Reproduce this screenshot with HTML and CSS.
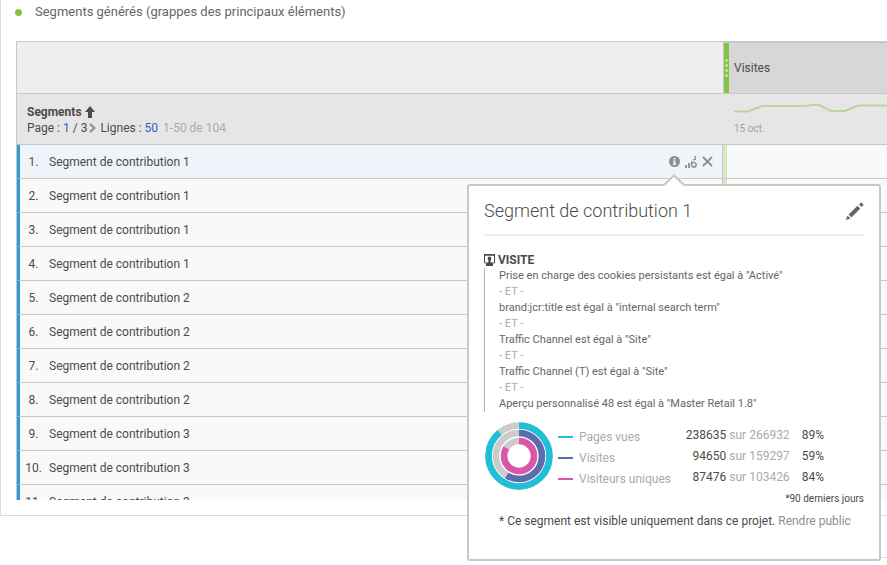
FILE: index.html
```
<!DOCTYPE html>
<html lang="fr">
<head>
<meta charset="utf-8">
<title>Segments générés</title>
<link rel="stylesheet" href="styles.css">
</head>
<body>
<main class="panel">
  <h1 class="panel-title"><span class="dot"></span>Segments générés (grappes des principaux éléments)</h1>
  <div class="table-view">
    <table class="segments">
      <colgroup><col class="col-name"><col></colgroup>
      <thead>
        <tr class="head-metric">
          <td></td>
          <th class="metric" scope="col"><div class="metric-cell"><span class="handle"><i></i><i></i><i></i><i></i></span>Visites</div></th>
        </tr>
        <tr class="head-tools">
          <th scope="col">
            <div class="sort">Segments
              <svg width="10" height="12" viewBox="0 0 10 12"><path d="M5 0L10 6H7V12H3V6H0Z" fill="#4b4b4b"/></svg>
            </div>
            <div class="pager">
              <span>Page : <a href="#page">1</a> / 3</span>
              <button class="icon-button" type="button" aria-label="Page suivante"><svg width="7" height="10" viewBox="0 0 7 10"><path d="M1 1L5.500 5L1 9" fill="none" stroke="#8e8e8e" stroke-width="2"/></svg></button>
              <span class="lines">Lignes : <a href="#lignes">50</a></span>
              <span class="range">1-50 de 104</span>
            </div>
          </th>
          <td class="trend">
            <svg class="spark" width="160" height="12" viewBox="0 0 160 12"><path d="M0 8.500H14L28 3H70L84 1.500L97 8H111L124 2.500H160" fill="none" stroke="#b9d696" stroke-width="2"/></svg>
            <div class="date">15 oct.</div>
          </td>
        </tr>
      </thead>
      <tbody>
        <tr class="selected">
          <td><div class="name-cell"><span class="num">1.</span><span class="name">Segment de contribution 1</span>
            <span class="actions">
              <button class="icon-button" type="button" aria-label="Informations"><svg width="11" height="11" viewBox="0 0 11 11"><circle cx="5.500" cy="5.500" r="5.500" fill="#8b8f92"/><path d="M4.500 2H6.500V3.500H4.500ZM4 4.500H6.500V8H7.300V9H3.800V8H4.600V5.500H4Z" fill="#eef4f9"/></svg></button>
              <button class="icon-button" type="button" aria-label="Visualiser"><svg width="12" height="12" viewBox="0 0 12 12"><path d="M0 9H2V12H0ZM3 7H5V12H3ZM6 5H7.500V7H6ZM9.500 0H11V4H9.500ZM8 3H10V4.500H8Z" fill="#92979a"/><circle cx="8.800" cy="8.800" r="2.300" fill="none" stroke="#92979a" stroke-width="1.700"/></svg></button>
              <button class="icon-button" type="button" aria-label="Supprimer"><svg width="11" height="11" viewBox="0 0 11 11"><path d="M1 1L10 10M10 1L1 10" stroke="#8b9093" stroke-width="1.800"/></svg></button>
            </span></div></td><td></td>
        </tr>
        <tr><td><div class="name-cell"><span class="num">2.</span><span class="name">Segment de contribution 1</span></div></td><td></td></tr>
        <tr><td><div class="name-cell"><span class="num">3.</span><span class="name">Segment de contribution 1</span></div></td><td></td></tr>
        <tr><td><div class="name-cell"><span class="num">4.</span><span class="name">Segment de contribution 1</span></div></td><td></td></tr>
        <tr><td><div class="name-cell"><span class="num">5.</span><span class="name">Segment de contribution 2</span></div></td><td></td></tr>
        <tr><td><div class="name-cell"><span class="num">6.</span><span class="name">Segment de contribution 2</span></div></td><td></td></tr>
        <tr><td><div class="name-cell"><span class="num">7.</span><span class="name">Segment de contribution 2</span></div></td><td></td></tr>
        <tr><td><div class="name-cell"><span class="num">8.</span><span class="name">Segment de contribution 2</span></div></td><td></td></tr>
        <tr><td><div class="name-cell"><span class="num">9.</span><span class="name">Segment de contribution 3</span></div></td><td></td></tr>
        <tr><td><div class="name-cell"><span class="num">10.</span><span class="name">Segment de contribution 3</span></div></td><td></td></tr>
        <tr><td><div class="name-cell"><span class="num">11.</span><span class="name">Segment de contribution 3</span></div></td><td></td></tr>
      </tbody>
    </table>
  </div>

  <aside class="popover">
    <svg class="arrow" width="20" height="12" viewBox="0 0 20 12"><path d="M0 12V11L10 1L20 11V12Z" fill="#fff"/><path d="M0 11L10 1.500L20 11" fill="none" stroke="#c8c8c8" stroke-width="2"/></svg>
    <header class="popover-head">
      <h2>Segment de contribution 1</h2>
      <button class="icon-button" type="button" aria-label="Modifier"><svg width="18" height="18" viewBox="0 0 18 18"><path d="M0 18L1.500 13.500L4.500 16.500ZM2.500 12.500L11.500 3.700L14.300 6.500L5.500 15.500ZM13 2.500L14.800 .700Q15.200 .300 15.700 .700L17.300 2.300Q17.700 2.800 17.300 3.200L15.500 5Z" fill="#666"/></svg></button>
    </header>
    <h3 class="scope"><svg width="11" height="12" viewBox="0 0 11 12"><path d="M.500 1H10.500V9H.500Z" fill="none" stroke="#4b4b4b"/><path d="M0 0H11V1.500H0ZM5.500 2.500C6.800 2.500 7.500 3.500 7.300 4.700Q7.100 6 6.500 6.700V8L9 10V12H2V10L4.500 8V6.700Q3.900 6 3.700 4.700C3.500 3.500 4.200 2.500 5.500 2.500Z" fill="#4b4b4b"/></svg>VISITE</h3>
    <div class="rules">
      <p>Prise en charge des cookies persistants est égal à "Activé"</p>
      <p class="and">- ET -</p>
      <p>brand:jcr:title est égal à "internal search term"</p>
      <p class="and">- ET -</p>
      <p>Traffic Channel est égal à "Site"</p>
      <p class="and">- ET -</p>
      <p>Traffic Channel (T) est égal à "Site"</p>
      <p class="and">- ET -</p>
      <p>Aperçu personnalisé 48 est égal à "Master Retail 1.8"</p>
    </div>
    <div class="stats">
      <svg width="68" height="68" viewBox="0 0 68 68">
        <g fill="none" stroke-width="6.500" transform="rotate(-90 34 34)">
          <g stroke="#cbcbcb"><circle cx="34" cy="34" r="30.500"/><circle cx="34" cy="34" r="23"/><circle cx="34" cy="34" r="15"/></g>
          <circle cx="34" cy="34" r="30.500" stroke="#1fbfd8" pathLength="100" stroke-dasharray="89 100"/>
          <circle cx="34" cy="34" r="23" stroke="#5b6dac" pathLength="100" stroke-dasharray="59 100"/>
          <circle cx="34" cy="34" r="15" stroke="#d957a6" pathLength="100" stroke-dasharray="84 100"/>
        </g>
      </svg>
      <table class="figures">
        <tr><th scope="row"><span class="key cyan"></span>Pages vues</th><td class="count">238635</td><td class="total">sur 266932</td><td class="share">89%</td></tr>
        <tr><th scope="row"><span class="key blue"></span>Visites</th><td class="count">94650</td><td class="total">sur 159297</td><td class="share">59%</td></tr>
        <tr><th scope="row"><span class="key pink"></span>Visiteurs uniques</th><td class="count">87476</td><td class="total">sur 103426</td><td class="share">84%</td></tr>
      </table>
    </div>
    <p class="period">*90 derniers jours</p>
    <p class="visibility">* Ce segment est visible uniquement dans ce projet. <a href="#public">Rendre public</a></p>
  </aside>
</main>
<div class="next-panel"></div>
</body>
</html>
```
FILE: styles.css
```
* { box-sizing: border-box; }

body {
  min-height: 100vh;
  margin: 0;
  background: #fff;
  color: #4b4b4b;
  font: 12px/16px Roboto, "Open Sans", sans-serif;
  overflow-x: hidden;
}

h1, h2, h3, p { margin: 0; }
svg { display: block; flex: none; }

.icon-button {
  display: block;
  padding: 0;
  border: 0;
  background: none;
}

.panel {
  position: relative;
  padding: 0 0 15px 15px;
  border-left: 1px solid #dcdcdc;
  border-bottom: 1px solid #dcdcdc;
}

.next-panel {
  width: 10%;
  margin: 41px 0 0 auto;
  border-top: 1px solid #dcdcdc;
}

.panel-title {
  display: flex;
  align-items: center;
  gap: 13px;
  height: 24px;
  margin-bottom: 17px;
  font-weight: 400;
  font-size: 13px;
  color: #666;
}

.dot {
  width: 7px;
  height: 7px;
  margin-left: -1px;
  border-radius: 50%;
  background: #84c341;
}

.table-view {
  max-height: 459px;
  overflow: hidden;
  border-top: 1px solid #c8c8c8;
  border-left: 1px solid #c8c8c8;
}

.segments {
  width: 100%;
  table-layout: fixed;
  border-collapse: separate;
  border-spacing: 0;
}

.col-name { width: 706px; }

.segments td, .segments th {
  padding: 0;
  border-bottom: 1px solid #c8c8c8;
  text-align: left;
  font-weight: 400;
}

.head-metric > * { height: 52px; background: #eee; }
.head-metric > .metric { border-top: 1px solid #c8c8c8; border-left: 1px solid #c8c8c8; background: #d7d7d7; }
.metric-cell { display: flex; align-items: center; gap: 5px; height: 50px; }

.handle {
  display: flex;
  flex-direction: column;
  justify-content: center;
  align-items: center;
  gap: 2px;
  width: 5px;
  height: 100%;
  background: #84c341;
}
.handle i { width: 3px; height: 3px; border-radius: 50%; background: #c5e3a3; }

.segments .head-tools > * { height: 51px; background: #e6e6e6; }
.segments .head-tools > th { padding: 2px 10px 0; }
.segments .head-tools > .trend { padding: 2px 0 0 11px; overflow: hidden; }
.sort { display: flex; align-items: center; gap: 3px; }
.segments .sort { font-weight: 700; }
.pager { display: flex; align-items: center; gap: 2px; }
.lines { margin-left: 2px; }
.range { margin-left: 3px; color: #aaa; }
.pager a { color: #2c62c4; text-decoration: none; }
.date { margin-top: 6px; color: #a0a0a0; font-size: 10px; }

.segments tbody td { height: 34px; background: #f9f9f9; }
.segments tbody td:first-child { border-left: 3px solid #2f9bd2; border-right: 1px solid #c8c8c8; }
.segments tbody td:last-child { border-left: 4px solid #d8e8c5; }
.segments .selected td:first-child { background: #eef4f9; }

.name-cell { display: flex; align-items: center; gap: 5px; padding: 0 9px 0 3px; }
.num { width: 21px; text-align: center; }
.actions { display: flex; align-items: center; gap: 5px; margin-left: auto; }

.popover {
  position: absolute;
  top: 184px;
  left: 466px;
  width: 414px;
  padding: 13px 15px 30px;
  border: 2px solid #c8c8c8;
  border-radius: 3px;
  background: #fff;
}
.arrow { position: absolute; top: -12px; left: 195px; }

.popover-head {
  display: flex;
  justify-content: space-between;
  align-items: center;
  padding-bottom: 11px;
  border-bottom: 2px solid #f0f0f0;
}
.popover-head h2 { font-weight: 300; font-size: 18px; line-height: 24px; }

.scope {
  display: flex;
  align-items: center;
  gap: 3px;
  margin-top: 16px;
  font-size: 12px;
}

.rules { padding-left: 14px; border-left: 1px solid #b4b4b4; color: #666; font-size: 11px; }
.rules .and { color: #aaa; }

.stats { display: flex; align-items: flex-start; gap: 5px; margin-top: 10px; padding-left: 1px; }

.figures { flex: 1; table-layout: fixed; margin-top: 2px; border-spacing: 0; }
.figures th, .figures td { height: 21px; padding: 0; text-align: left; font-weight: 400; }
.figures th { padding-top: 4px; color: #aaa; white-space: nowrap; }
.figures .count { width: 56px; text-align: right; }
.figures .total { width: 76px; padding-left: 3px; color: #aaa; white-space: nowrap; }
.figures .share { width: 64px; }
.key { display: inline-block; width: 15px; height: 2px; margin-right: 6px; vertical-align: middle; }
.cyan { background: #1fbfd8; }
.blue { background: #5b6dac; }
.pink { background: #d957a6; }

.period { margin-top: 1px; font-size: 10px; line-height: 16px; text-align: right; }
.visibility { margin: 6px 0 0 15px; }
.visibility a { color: #8e8e8e; text-decoration: none; }
```
